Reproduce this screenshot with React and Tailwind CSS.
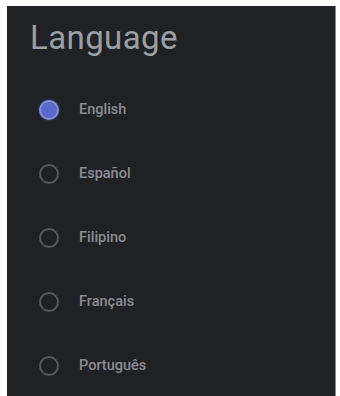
import React from "react";

const langs = ["English", "Español", "Filipino", "Français", "Português"];

export default function App() {
  return (
    <div className="w-[340px] h-[396px] bg-white overflow-hidden pl-[7px] pr-[4px] pt-[6px]" style={{ fontFamily: "Roboto, 'Noto Sans', sans-serif" }}>
      <div className="h-[400px] bg-[#202124] border-r border-[#8a8a8a]">
        <div className="pl-[23px] pt-[14px] text-[33px] leading-[36px] text-[#9aa0a6] tracking-[0.4px]">Language</div>
        <div className="flex flex-col pt-[22px]">
          {langs.map((l, i) => (
            <div key={l} className="h-[64px] flex items-center pl-[32px] gap-[20px]">
              {i === 0 ? (
                <div className="w-[20px] h-[20px] rounded-full border-[2px] border-[#8590cf] bg-[#5a6ad0] shadow-[0_0_3px_#3d4aa0]" />
              ) : (
                <div className="w-[20px] h-[20px] rounded-full border-[2px] border-[#55585d]" />
              )}
              <span className="text-[14.5px] font-medium text-[#8a8e94]">{l}</span>
            </div>
          ))}
        </div>
      </div>
    </div>
  );
}
